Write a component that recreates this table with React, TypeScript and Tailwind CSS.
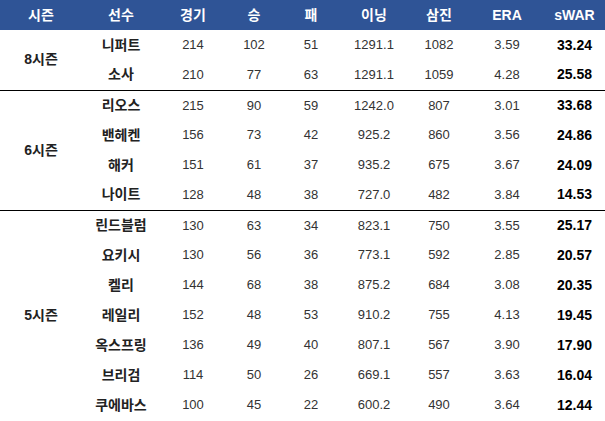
import React from 'react';

type Row = { name: string; g: number; w: number; l: number; ip: string; so: number; era: string; war: string };

const groups: { season: string; rows: Row[] }[] = [
  {
    season: '8시즌',
    rows: [
      { name: '니퍼트', g: 214, w: 102, l: 51, ip: '1291.1', so: 1082, era: '3.59', war: '33.24' },
      { name: '소사', g: 210, w: 77, l: 63, ip: '1291.1', so: 1059, era: '4.28', war: '25.58' },
    ],
  },
  {
    season: '6시즌',
    rows: [
      { name: '리오스', g: 215, w: 90, l: 59, ip: '1242.0', so: 807, era: '3.01', war: '33.68' },
      { name: '밴헤켄', g: 156, w: 73, l: 42, ip: '925.2', so: 860, era: '3.56', war: '24.86' },
      { name: '해커', g: 151, w: 61, l: 37, ip: '935.2', so: 675, era: '3.67', war: '24.09' },
      { name: '나이트', g: 128, w: 48, l: 38, ip: '727.0', so: 482, era: '3.84', war: '14.53' },
    ],
  },
  {
    season: '5시즌',
    rows: [
      { name: '린드블럼', g: 130, w: 63, l: 34, ip: '823.1', so: 750, era: '3.55', war: '25.17' },
      { name: '요키시', g: 130, w: 56, l: 36, ip: '773.1', so: 592, era: '2.85', war: '20.57' },
      { name: '켈리', g: 144, w: 68, l: 38, ip: '875.2', so: 684, era: '3.08', war: '20.35' },
      { name: '레일리', g: 152, w: 48, l: 53, ip: '910.2', so: 755, era: '4.13', war: '19.45' },
      { name: '옥스프링', g: 136, w: 49, l: 40, ip: '807.1', so: 567, era: '3.90', war: '17.90' },
      { name: '브리검', g: 114, w: 50, l: 26, ip: '669.1', so: 557, era: '3.63', war: '16.04' },
      { name: '쿠에바스', g: 100, w: 45, l: 22, ip: '600.2', so: 490, era: '3.64', war: '12.44' },
    ],
  },
];

const headers = ['시즌', '선수', '경기', '승', '패', '이닝', '삼진', 'ERA', 'sWAR'];

const font = { fontFamily: '"Liberation Sans", "Noto Sans CJK KR", sans-serif' };

export default function App() {
  return (
    <div className="w-[605px] h-[421px] bg-white overflow-hidden" style={font}>
      <table className="w-[605px] table-fixed border-collapse">
        <colgroup>
          <col className="w-[82px]" />
          <col className="w-[78px]" />
          <col className="w-[66px]" />
          <col className="w-[56px]" />
          <col className="w-[58px]" />
          <col className="w-[68px]" />
          <col className="w-[62px]" />
          <col className="w-[74px]" />
          <col className="w-[61px]" />
        </colgroup>
        <thead>
          <tr className="h-[30px] bg-[#2f5496]">
            {headers.map((h) => (
              <th key={h} className="p-0 text-center text-[14px] font-bold text-white">
                {h}
              </th>
            ))}
          </tr>
        </thead>
        <tbody>
          {groups.map((grp, gi) =>
            grp.rows.map((r, ri) => (
              <tr
                key={r.name}
                className={`h-[30px] ${ri === 0 && gi > 0 ? 'border-t border-black' : ''}`}
              >
                {ri === 0 && (
                  <td rowSpan={grp.rows.length} className="p-0 text-center text-[14px] font-bold text-[#222]">
                    {grp.season}
                  </td>
                )}
                <td className="p-0 text-center text-[14px] font-bold text-[#222]">{r.name}</td>
                <td className="p-0 text-center text-[13px] text-[#333]">{r.g}</td>
                <td className="p-0 text-center text-[13px] text-[#333]">{r.w}</td>
                <td className="p-0 text-center text-[13px] text-[#333]">{r.l}</td>
                <td className="p-0 text-center text-[13px] text-[#333]">{r.ip}</td>
                <td className="p-0 text-center text-[13px] text-[#333]">{r.so}</td>
                <td className="p-0 text-center text-[13px] text-[#333]">{r.era}</td>
                <td className="p-0 text-center text-[14px] font-bold text-black">{r.war}</td>
              </tr>
            ))
          )}
        </tbody>
      </table>
    </div>
  );
}
